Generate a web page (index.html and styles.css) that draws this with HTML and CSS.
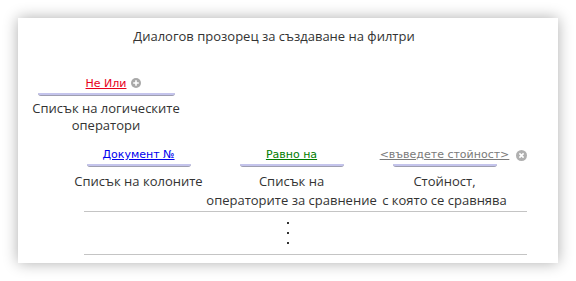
FILE: index.html
```html
<!DOCTYPE html>
<html lang="bg">
<head>
    <meta charset="UTF-8">
    <meta name="viewport" content="width=device-width, initial-scale=1.0">
    <title>Диалогов прозорец за създаване на филтри</title>
    <link rel="stylesheet" href="styles.css">
</head>
<body>
    <div class="dialog">
        <div class="title">Диалогов прозорец за създаване на филтри</div>

        <div class="logic">
            <div class="field">
                <a href="#" class="link link-red">Не Или</a>
                <span class="icon icon-add">
                    <svg width="10" height="10" viewBox="0 0 10 10">
                        <circle cx="5" cy="5" r="5" fill="#a9a9a9"/>
                        <path d="M5 2.2v5.6M2.2 5h5.6" stroke="#fff" stroke-width="1.6"/>
                    </svg>
                </span>
            </div>
            <div class="bar"></div>
            <div class="caption">Списък на логическите<br>оператори</div>
        </div>

        <div class="conditions">
            <div class="column">
                <div class="field">
                    <a href="#" class="link link-blue">Документ №</a>
                </div>
                <div class="bar"></div>
                <div class="caption">Списък на колоните</div>
            </div>
            <div class="column">
                <div class="field">
                    <a href="#" class="link link-green">Равно на</a>
                </div>
                <div class="bar"></div>
                <div class="caption">Списък на<br>операторите за сравнение</div>
            </div>
            <div class="column">
                <div class="field">
                    <a href="#" class="link link-grey">&lt;въведете стойност&gt;</a>
                    <span class="icon icon-remove">
                        <svg width="11" height="11" viewBox="0 0 11 11">
                            <circle cx="5.5" cy="5.5" r="5.5" fill="#b0b0b0"/>
                            <path d="M3.4 3.4l4.2 4.2M7.6 3.4l-4.2 4.2" stroke="#fff" stroke-width="1.6"/>
                        </svg>
                    </span>
                </div>
                <div class="bar"></div>
                <div class="caption">Стойност,<br>с която се сравнява</div>
            </div>
        </div>

        <div class="rows">
            <div class="dots"><i></i><i></i><i></i></div>
        </div>
    </div>
</body>
</html>
```

FILE: styles.css
```css
body {
    margin: 0;
    background: #fff;
    font-family: 'Open Sans', sans-serif;
    color: #333;
}
.dialog {
    box-sizing: border-box;
    width: 540px;
    height: 245px;
    margin: 18px;
    padding-top: 9px;
    background: #fff;
    box-shadow: 0 0 14px rgba(0, 0, 0, 0.32);
}
.title {
    font-size: 13px;
    line-height: 18px;
    text-align: center;
    padding-right: 28px;
}
.logic {
    display: flex;
    flex-direction: column;
    align-items: center;
    width: 146px;
    margin: 32px 0 0 15px;
}
.conditions {
    display: flex;
    margin: 14px 0 0 44px;
}
.column {
    display: flex;
    flex-direction: column;
    align-items: center;
    width: 153px;
}
.field {
    position: relative;
    font-family: 'DejaVu Sans', sans-serif;
    font-size: 11px;
    line-height: 14px;
    white-space: nowrap;
}
.link {
    text-decoration: underline;
}
.link-red { color: #e8001c; }
.link-blue { color: #0000ee; }
.link-green { color: #007c00; }
.link-grey { color: #7a7a7a; }
.icon {
    position: absolute;
    top: 1px;
    line-height: 0;
}
.icon-add { left: calc(100% + 5px); }
.icon-remove { left: calc(100% + 7px); top: 2px; }
.bar {
    width: 137px;
    height: 2px;
    margin-top: 2px;
    background: #c4c4ec;
    border-bottom: 1px solid #9e9eb0;
    border-radius: 0 0 4px 4px;
}
.column .bar {
    width: 104px;
}
.caption {
    margin-top: 5px;
    font-size: 13px;
    line-height: 19px;
    text-align: center;
    white-space: nowrap;
}
.logic .caption {
    margin-top: 4px;
    line-height: 17px;
}
.rows {
    width: 443px;
    height: 42px;
    margin: 1px 0 0 66px;
    border-top: 1px solid #c4c4c4;
    border-bottom: 1px solid #c4c4c4;
}
.dots {
    display: flex;
    flex-direction: column;
    align-items: center;
    gap: 8px;
    padding: 10px 35px 0 0;
}
.dots i {
    width: 2px;
    height: 2px;
    background: #333;
}
```
